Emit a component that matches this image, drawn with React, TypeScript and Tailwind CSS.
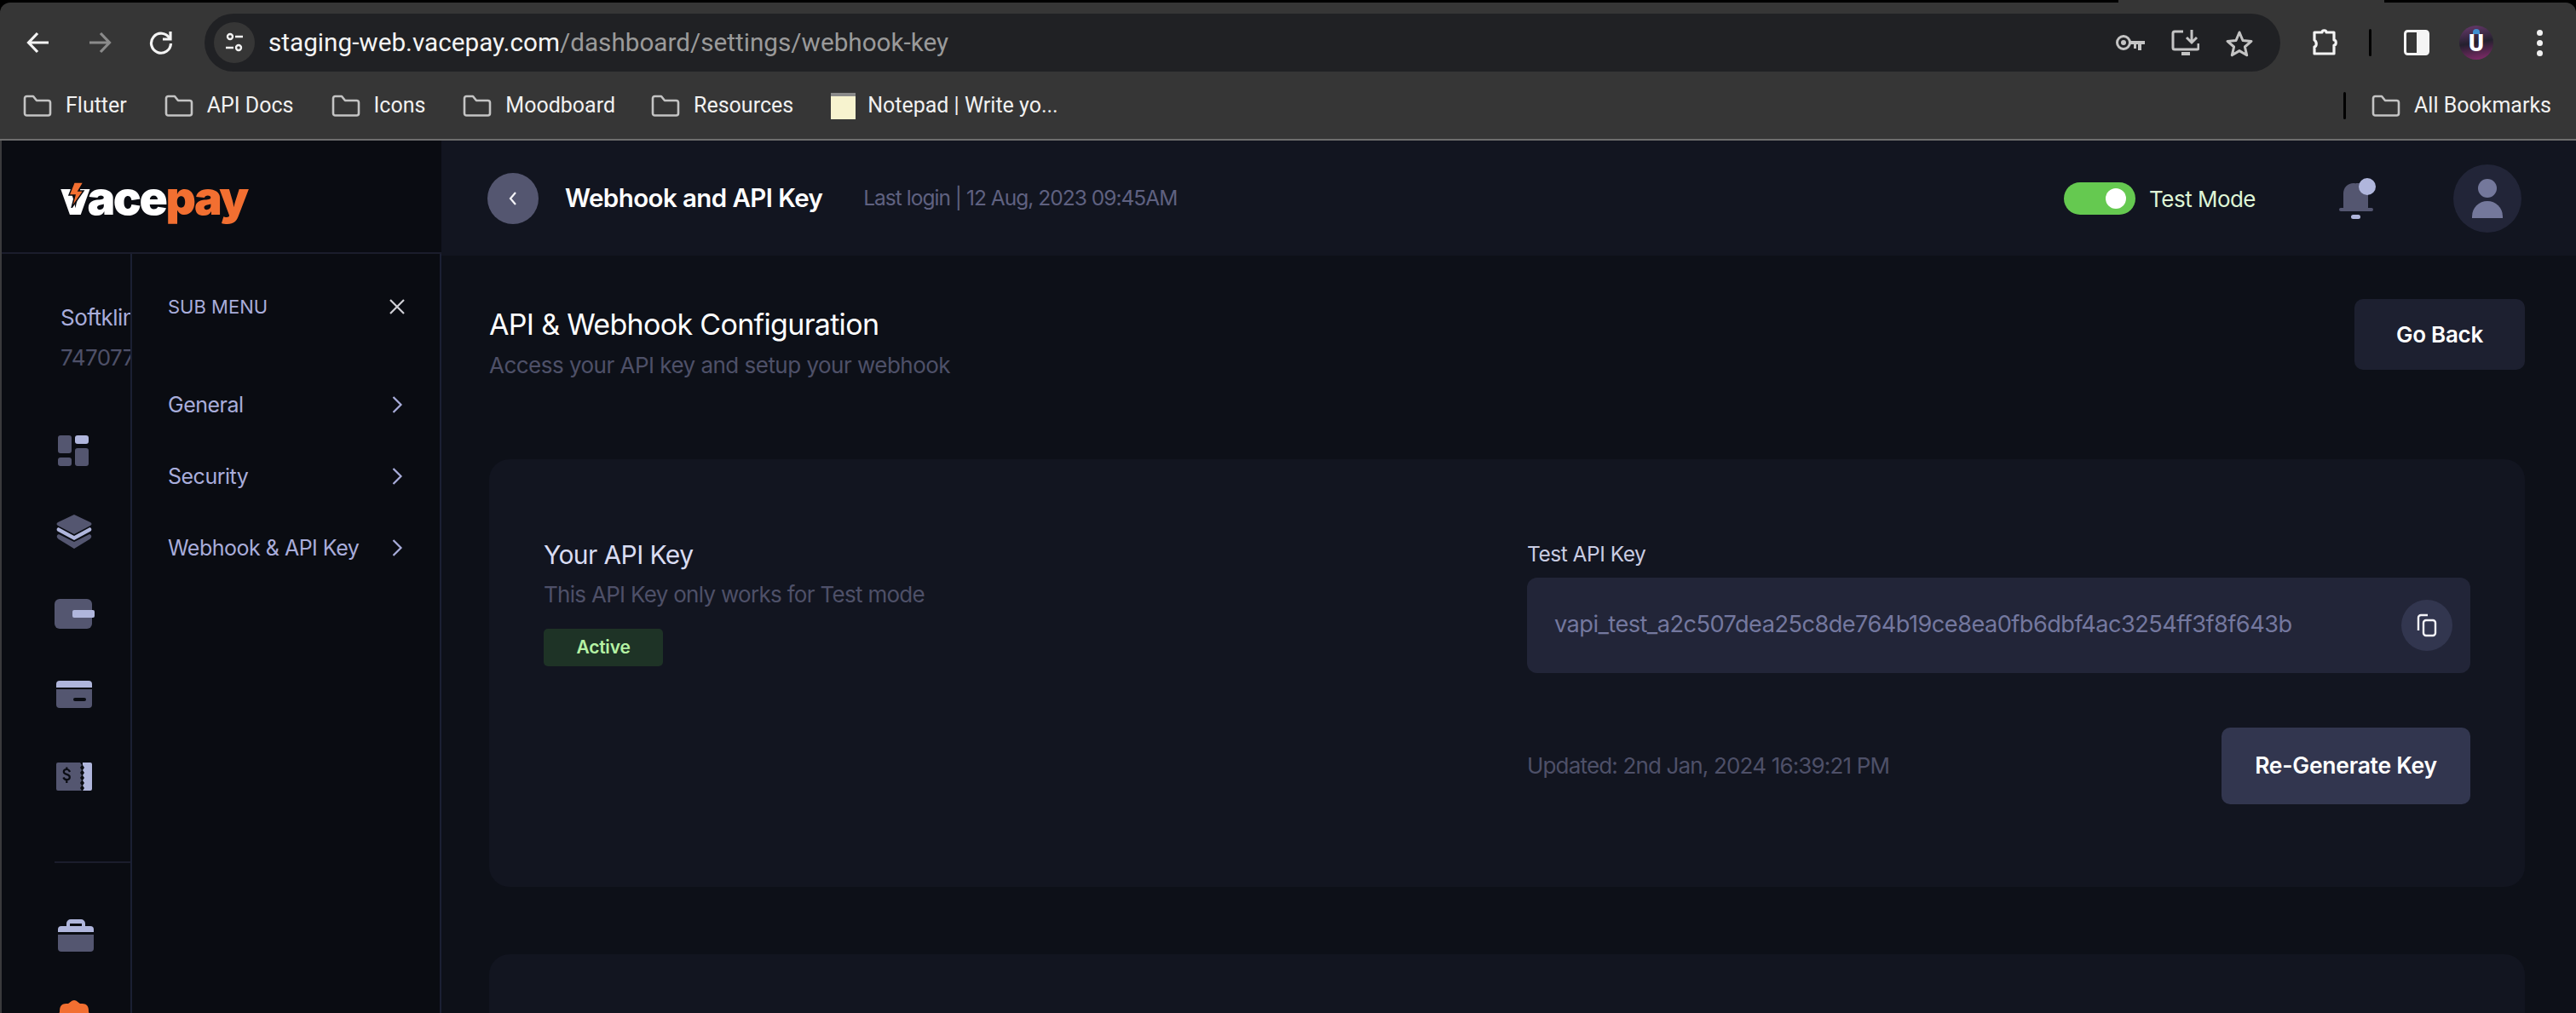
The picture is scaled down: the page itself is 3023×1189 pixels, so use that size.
import React from "react";

const FONT = "font-['Inter',sans-serif]";

function Folder({ className = "" }: { className?: string }) {
  return (
    <svg width="34" height="26" viewBox="0 0 34 26" fill="none" className={className}>
      <path d="M2 22V4.5C2 3 3 2 4.5 2H12l4 5h13.5C31 7 32 8 32 9.5V22c0 1.5-1 2.5-2.5 2.5h-25C3 24.5 2 23.5 2 22Z" stroke="#c4c4c4" strokeWidth="2.6" strokeLinejoin="round" />
    </svg>
  );
}

function Bookmark({ label, className = "" }: { label: string; className?: string }) {
  return (
    <div className={`flex items-center gap-[16px] ${className}`}>
      <Folder />
      <span className="text-[25px] text-[#f1f1f1]">{label}</span>
    </div>
  );
}

function Chrome() {
  return (
    <div className="bg-black font-['Roboto',sans-serif]">
      <div className="flex h-[3px]">
        <div className="flex-1 bg-black" />
        <div className="w-[312px] bg-[#363636]" />
        <div className="w-[225px] bg-black" />
      </div>
      <div className="h-[160px] rounded-t-[12px] bg-[#363636]">
        <div className="flex h-[92px] items-center pl-[30px] pt-[2px]">
          <svg width="30" height="30" viewBox="0 0 30 30" fill="none" stroke="#f4f4f4" strokeWidth="3.2">
            <path d="M27 15H4M14 4 3.5 15 14 26" />
          </svg>
          <svg width="30" height="30" viewBox="0 0 30 30" fill="none" stroke="#8b8b8b" strokeWidth="3.2" className="ml-[42px]">
            <path d="M3 15h23M16 4l10.5 11L16 26" />
          </svg>
          <svg width="30" height="30" viewBox="0 0 30 30" fill="none" stroke="#f4f4f4" strokeWidth="3.2" className="ml-[42px]">
            <path d="M25 10A11.5 11.5 0 1 0 26.5 16" />
            <path d="M26 2v9h-9" />
          </svg>
          <div className="ml-[36px] flex h-[68px] w-[2436px] items-center rounded-full bg-[#202124]">
            <div className="ml-[11px] flex h-[48px] w-[48px] items-center justify-center rounded-full bg-[#363636]">
              <svg width="24" height="24" viewBox="0 0 24 24" fill="none" stroke="#f1f1f1" strokeWidth="2.4">
                <circle cx="7" cy="5" r="3" />
                <path d="M13 5h9M2 18h9" />
                <circle cx="17" cy="18" r="3" />
              </svg>
            </div>
            <div className="ml-[16px] text-[29.7px] leading-none text-[#f4f4f4]">
              staging-web.vacepay.com<span className="text-[#9a9a9a]">/dashboard/settings/webhook-key</span>
            </div>
            <div className="ml-auto flex items-center pr-[31px]">
              <svg width="36" height="22" viewBox="0 0 36 22" fill="none">
                <circle cx="10" cy="11" r="7.5" stroke="#c4c4c4" strokeWidth="3" />
                <circle cx="10" cy="11" r="3" fill="#c4c4c4" />
                <path d="M17 9h18v4h-4v7h-4v-7h-2v5h-3v-5h-5Z" fill="#c4c4c4" />
              </svg>
              <svg width="33" height="32" viewBox="0 0 33 32" fill="none" stroke="#c4c4c4" strokeWidth="3" className="ml-[30px]">
                <path d="M14 3H4a2 2 0 0 0-2 2v17a2 2 0 0 0 2 2h26a2 2 0 0 0 2-2v-5" />
                <path d="M12 29h10" strokeWidth="4" />
                <path d="M24 1v14M18 10l6 6 6-6" />
              </svg>
              <svg width="34" height="33" viewBox="0 0 34 33" fill="none" stroke="#c4c4c4" strokeWidth="3" className="ml-[30px]">
                <path d="M17 4l4 9.5 10 .9-7.6 6.6 2.3 9.8L17 25.6 8.300 30.800l2.300-9.800L3 14.400l10-.9Z" strokeLinejoin="round" />
              </svg>
            </div>
          </div>
          <svg width="34" height="32" viewBox="0 0 34 32" fill="none" stroke="#f4f4f4" strokeWidth="3.2" className="ml-[37px]">
            <path d="M3 4h9c0-3 5-3 5 0h9v9c3 0 3 6 0 6v10H3v-8c3-1 3-6 0-8Z" strokeLinejoin="round" />
          </svg>
          <div className="ml-[33px] h-[32px] w-[3px] rounded bg-black" />
          <svg width="30" height="30" viewBox="0 0 30 30" className="ml-[38px]">
            <rect x="1.500" y="1.500" width="27" height="27" rx="3" fill="none" stroke="#f4f4f4" strokeWidth="3" />
            <rect x="15" y="2" width="13" height="26" fill="#f4f4f4" />
          </svg>
          <div className="relative ml-[35px] flex h-[40px] w-[40px] items-center justify-center overflow-hidden rounded-full bg-[linear-gradient(170deg,#6b3a6f,#24202e_50%,#8a2b70)]">
            <div className="absolute left-[16px] top-[4px] h-[6px] w-[8px] rounded-t-full bg-[#3f8fd0]" />
            <span className="mt-[2px] text-[27px] font-black leading-none text-white">U</span>
          </div>
          <div className="ml-[51px] flex flex-col gap-[5px]">
            <div className="h-[7px] w-[7px] rounded-full bg-[#f1f1f1]" />
            <div className="h-[7px] w-[7px] rounded-full bg-[#f1f1f1]" />
            <div className="h-[7px] w-[7px] rounded-full bg-[#f1f1f1]" />
          </div>
        </div>
        <div className="flex h-[58px] items-center pl-[27px] pr-[29px]">
          <Bookmark label="Flutter" />
          <Bookmark label="API Docs" className="ml-[44px]" />
          <Bookmark label="Icons" className="ml-[44px]" />
          <Bookmark label="Moodboard" className="ml-[44px]" />
          <Bookmark label="Resources" className="ml-[42px]" />
          <div className="ml-[44px] flex items-center gap-[14px]">
            <div className="h-[31px] w-[29px] border-t-[4px] border-t-[#8a8a8a] bg-[#f7f3cf]" />
            <span className="text-[25px] text-[#f1f1f1]">Notepad | Write yo...</span>
          </div>
          <div className="ml-auto h-[32px] w-[3px] rounded bg-black" />
          <Bookmark label="All Bookmarks" className="ml-[30px]" />
        </div>
      </div>
      <div className="h-[2px] bg-[#6d6d6d]" />
    </div>
  );
}

function Logo() {
  return (
    <div className="relative font-['Inter',sans-serif] text-[55px] font-black leading-none tracking-[-0.045em]">
      <span className="text-white">vace</span>
      <span className="text-[#f26f31]">pay</span>
      <svg width="22" height="30" viewBox="0 0 22 30" className="absolute left-[7px] top-[9px]">
        <path d="M9 0h11l-6 10h6L6 30l4-15H3Z" fill="#f26f31" stroke="#0a0c12" strokeWidth="1.500" />
      </svg>
    </div>
  );
}

function RailIcons() {
  const dark = "#545670";
  const light = "#b0b6dc";
  const bg = "#0a0c12";
  return (
    <div className="flex flex-col">
      <svg width="36" height="36" viewBox="0 0 36 36" className="ml-[68px]">
        <rect x="0" y="0" width="16" height="21" rx="3" fill={dark} />
        <rect x="20" y="0" width="16" height="10" rx="3" fill={light} />
        <rect x="0" y="26" width="16" height="10" rx="3" fill={dark} />
        <rect x="20" y="15" width="16" height="21" rx="3" fill={dark} />
      </svg>
      <svg width="42" height="42" viewBox="0 0 42 42" className="ml-[66px] mt-[56px]">
        <path d="M21 1 40 10c2 1 2 3 0 4L21 24 2 14c-2-1-2-3 0-4Z" fill={dark} />
        <path d="M2.500 16 21 26 39.500 16c2.500 1 2.500 4 0 5L21 31 2.500 21c-2.500-1-2.500-4 0-5Z" fill={light} />
        <path d="M3 24 21 33 39 24c3 1 3 4 0 6L21 41 3 30c-3-2-3-5 0-6Z" fill={dark} />
      </svg>
      <svg width="47" height="35" viewBox="0 0 47 35" className="ml-[64px] mt-[58px]">
        <rect x="0" y="0" width="44" height="35" rx="6" fill={dark} />
        <rect x="21" y="13" width="26" height="9" rx="2" fill={light} />
      </svg>
      <svg width="42" height="32" viewBox="0 0 42 32" className="ml-[66px] mt-[61px]">
        <path d="M0 8V4a4 4 0 0 1 4-4h34a4 4 0 0 1 4 4v4Z" fill={light} />
        <path d="M0 10h42v18a4 4 0 0 1-4 4H4a4 4 0 0 1-4-4Z" fill={dark} />
        <rect x="20" y="20" width="15" height="4" rx="2" fill={bg} />
      </svg>
      <svg width="42" height="33" viewBox="0 0 42 33" className="ml-[66px] mt-[64px]">
        <path d="M2 0h26l2 3-2 3 2 3-2 3 2 3-2 3 2 3-2 3 2 3-2 3 2 3H2a2 2 0 0 1-2-2V2a2 2 0 0 1 2-2Z" fill={dark} />
        <path d="M31 0h9a2 2 0 0 1 2 2v29a2 2 0 0 1-2 2h-9l2-3-2-3 2-3-2-3 2-3-2-3 2-3-2-3 2-3-2-3Z" fill={light} />
        <path d="M16 11c-.8-2-2-3-3.800-3-2 0-3.400 1-3.400 2.800s1.500 2.600 3.500 3.100 3.500 1.400 3.500 3.300-1.500 3-3.600 3c-1.700 0-3-.9-3.800-2.700M12.300 5.500v3M12.300 21v3" stroke={bg} strokeWidth="2.200" fill="none" />
      </svg>
      <div className="ml-[64px] mt-[83px] h-[2px] bg-[#1b1d2c]" />
      <svg width="42" height="39" viewBox="0 0 42 39" className="ml-[68px] mt-[65px]">
        <path d="M10 9V6a5 5 0 0 1 5-5h12a5 5 0 0 1 5 5v3h-4V6H14v3Z" fill={light} />
        <path d="M0 13a4 4 0 0 1 4-4h34a4 4 0 0 1 4 4v3H0Z" fill={light} />
        <path d="M0 19h42v16a4 4 0 0 1-4 4H4a4 4 0 0 1-4-4Z" fill={dark} />
      </svg>
      <svg width="42" height="42" viewBox="0 0 42 42" className="ml-[66px] mt-[57px]">
        <path d="M21 0c3 0 5 3 7 4 3 0 6 0 8 2s2 5 2 8c1 2 4 4 4 7s-3 5-4 7c0 3 0 6-2 8s-5 2-8 2c-2 1-4 4-7 4s-5-3-7-4c-3 0-6 0-8-2s-2-5-2-8c-1-2-4-4-4-7s3-5 4-7c0-3 0-6 2-8s5-2 8-2c2-1 4-4 7-4Z" fill="#f26f31" />
      </svg>
    </div>
  );
}

function MenuItem({ label }: { label: string }) {
  return (
    <div className="flex h-[84px] items-center justify-between pr-[43px]">
      <span className="text-[25px] leading-none tracking-[-0.02em] text-[#a9addb]">{label}</span>
      <svg width="14" height="22" viewBox="0 0 14 22" fill="none" stroke="#a9addb" strokeWidth="2.200">
        <path d="M2.500 2 11.500 11l-9 9" />
      </svg>
    </div>
  );
}

function Sidebar() {
  return (
    <aside className="flex w-[518px] shrink-0 flex-col border-l-2 border-[#3a3a3c] bg-[#0a0c12]">
      <div className="flex h-[133px] items-start border-b-2 border-[#1b1d2c] pl-[69px] pt-[40px]">
        <Logo />
      </div>
      <div className="flex min-h-0 flex-1">
        <div className="w-[153px] shrink-0 overflow-hidden border-r-2 border-[#1b2033] pt-[60px]">
          <div className="w-[300px]">
            <div className="pl-[69px] text-[26px] leading-[30px] tracking-[-0.02em] text-[#a9addb]">Softklin</div>
            <div className="mt-[17px] pl-[69px] text-[26px] leading-[30px] tracking-[-0.02em] text-[#4e5068]">747077</div>
            <div className="-ml-[2px] mt-[76px]">
              <RailIcons />
            </div>
          </div>
        </div>
        <div className="flex flex-1 flex-col border-r-2 border-[#1b2033] pl-[42px] pt-[48px]">
          <div className="flex h-[28px] items-center justify-between pr-[40px]">
            <span className="text-[22px] leading-none text-[#a9addb]">SUB MENU</span>
            <svg width="20" height="20" viewBox="0 0 20 20" fill="none" stroke="#d0d0d6" strokeWidth="2.200">
              <path d="M2 2l16 16M18 2 2 18" />
            </svg>
          </div>
          <div className="mt-[59px] flex flex-col">
            <MenuItem label="General" />
            <MenuItem label="Security" />
            <MenuItem label="Webhook & API Key" />
          </div>
        </div>
      </div>
    </aside>
  );
}

function TopBar() {
  return (
    <header className="flex h-[135px] shrink-0 items-center bg-[#121520] pl-[54px] pr-[64px]">
      <div className="flex h-[60px] w-[60px] items-center justify-center rounded-full bg-[#545670]">
        <svg width="12" height="20" viewBox="0 0 12 20" fill="none" stroke="#f4f4f8" strokeWidth="2.200">
          <path d="M9 3 3 10l6 7" />
        </svg>
      </div>
      <div className="ml-[31px] text-[29.5px] font-semibold leading-none tracking-[-0.02em] text-white">Webhook and API Key</div>
      <div className="ml-[48px] text-[24.5px] leading-none tracking-[-0.04em] text-[#5f6180]">Last login | 12 Aug, 2023 09:45AM</div>
      <div className="ml-auto flex h-[38px] w-[84px] items-center justify-end rounded-full bg-[#65c950] pr-[11px]">
        <div className="h-[24px] w-[24px] rounded-full bg-white" />
      </div>
      <div className="ml-[16px] mt-[2px] text-[26px] leading-none tracking-[-0.02em] text-[#dff5d6]">Test Mode</div>
      <svg width="44" height="49" viewBox="0 0 44 49" className="ml-[98px]">
        <path d="M5 38V19C5 12 10 7 17 7c7 0 13 4 13 12v19Z" fill="#545670" />
        <path d="M20 7h14v30H20Z" fill="#545670" />
        <rect x="0" y="36" width="40" height="4" rx="2" fill="#545670" />
        <rect x="14" y="44" width="11" height="5" rx="2.500" fill="#b0b6dc" />
        <circle cx="33" cy="11" r="10" fill="#b0b6dc" />
      </svg>
      <div className="ml-[90px] flex h-[80px] w-[80px] flex-col items-center justify-center rounded-full bg-[#222538]">
        <div className="h-[22px] w-[22px] rounded-full bg-[#74789b]" />
        <div className="mt-[4px] h-[20px] w-[36px] rounded-t-full bg-[#74789b]" />
      </div>
    </header>
  );
}

function ApiCard() {
  return (
    <section className="flex h-[502px] rounded-[24px] bg-[#121520] pl-[64px] pr-[64px] pt-[94px]">
      <div className="w-[1154px] shrink-0">
        <div className="text-[30px] leading-[36px] tracking-[-0.02em] text-[#d9dcf2]">Your API Key</div>
        <div className="mt-[14px] text-[26px] leading-[30px] tracking-[-0.027em] text-[#4e5068]">This API Key only works for Test mode</div>
        <div className="mt-[25px] flex h-[44px] w-[140px] items-center justify-center rounded-[5px] bg-[#1e3326] text-[21px] font-semibold tracking-[-0.01em] text-[#b5f2a4]">Active</div>
      </div>
      <div className="flex-1">
        <div className="mt-[2px] text-[24.5px] leading-[30px] tracking-[-0.02em] text-[#c9cce2]">Test API Key</div>
        <div className="mt-[13px] flex h-[112px] items-center justify-between rounded-[12px] bg-[#222538] pl-[32px] pr-[21px]">
          <span className="mb-[2px] text-[27.2px] leading-none tracking-[-0.02em] text-[#74789f]">vapi_test_a2c507dea25c8de764b19ce8ea0fb6dbf4ac3254ff3f8f643b</span>
          <div className="flex h-[60px] w-[60px] items-center justify-center rounded-full bg-[#32364f]">
            <svg width="26" height="28" viewBox="0 0 26 28" fill="none" stroke="#f4f4f8" strokeWidth="2.400">
              <path d="M3 20V5a3 3 0 0 1 3-3h8" />
              <rect x="9" y="8" width="14" height="18" rx="3" />
            </svg>
          </div>
        </div>
        <div className="mt-[64px] flex items-center justify-between">
          <span className="text-[26px] leading-none tracking-[-0.032em] text-[#4e5068]">Updated: 2nd Jan, 2024 16:39:21 PM</span>
          <div className="flex h-[90px] w-[292px] items-center justify-center rounded-[10px] bg-[#32364f] text-[26.5px] font-semibold tracking-[-0.01em] text-white">Re-Generate Key</div>
        </div>
      </div>
    </section>
  );
}

function Main() {
  return (
    <main className="flex min-w-0 flex-1 flex-col bg-[#0d1018]">
      <TopBar />
      <div className="flex-1 overflow-hidden pl-[56px] pr-[60px]">
        <div className="flex items-start justify-between pt-[51px]">
          <div className="mt-[10px]">
            <div className="text-[34px] leading-[40px] tracking-[-0.02em] text-white">API &amp; Webhook Configuration</div>
            <div className="mt-[13px] text-[26px] leading-[30px] tracking-[-0.02em] text-[#4e5068]">Access your API key and setup your webhook</div>
          </div>
          <div className="flex h-[83px] w-[200px] items-center justify-center rounded-[10px] bg-[#1d2030] text-[26px] font-semibold tracking-[-0.01em] text-white">Go Back</div>
        </div>
        <div className="mt-[95px]">
          <ApiCard />
        </div>
        <div className="mt-[79px] h-[400px] rounded-[24px] bg-[#121520]" />
      </div>
    </main>
  );
}

export default function App() {
  return (
    <div className={`flex h-[1189px] w-[3023px] flex-col overflow-hidden ${FONT}`}>
      <Chrome />
      <div className="flex min-h-0 flex-1">
        <Sidebar />
        <Main />
      </div>
    </div>
  );
}
